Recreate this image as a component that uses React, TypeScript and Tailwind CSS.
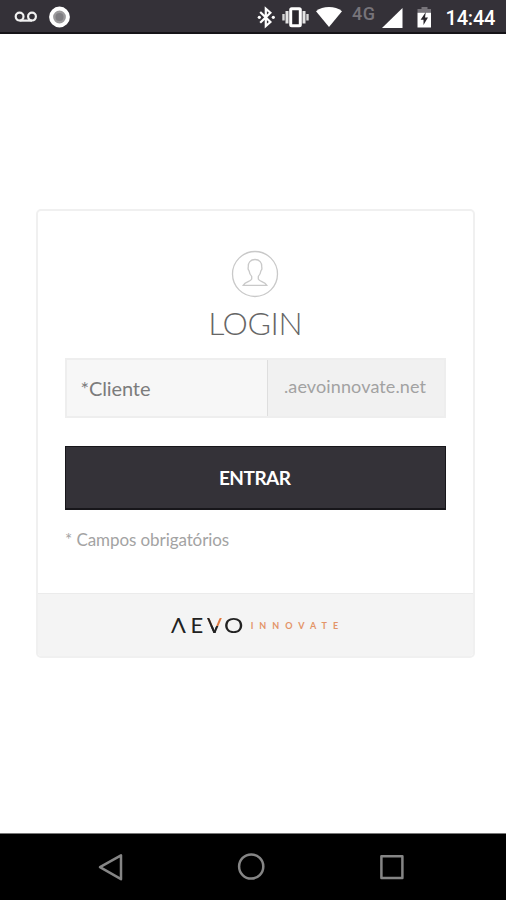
import { useState } from 'react'

function StatusBar() {
  return (
    <div className="flex h-[34px] items-start border-b-2 border-[#151318] bg-[#343138]">
      <svg width="436" height="32" viewBox="0 0 436 32" className="shrink-0">
        {/* voicemail */}
        <g fill="none" stroke="#f1f1f1" strokeWidth="2.2">
          <circle cx="19.6" cy="16.6" r="3.9" />
          <circle cx="32" cy="16.6" r="3.9" />
          <path d="M19.6 20.6H32" />
        </g>
        {/* recording dot */}
        <circle cx="59.5" cy="17" r="8.4" fill="#9b9a9c" stroke="#fff" strokeWidth="4" />
        <circle cx="59.5" cy="17" r="4" fill="#7f7e82" />
        {/* bluetooth */}
        <path d="M260.2 12L270.4 22L265.8 26V8.7L270.4 12.7L260.2 22.7" fill="none" stroke="#fff" strokeWidth="2.2" />
        <circle cx="259.3" cy="17.3" r="1.6" fill="#fff" />
        <circle cx="273.3" cy="17.3" r="1.6" fill="#fff" />
        {/* vibrate */}
        <rect x="290.7" y="8.7" width="9.6" height="17" rx="1" fill="#29262c" stroke="#fff" strokeWidth="3" />
        <path d="M287 11V23.5M304 11V23.5" stroke="#e4e4e4" strokeWidth="3" />
        <path d="M283.5 14V20.5M307.5 14V20.5" stroke="#d6d6d6" strokeWidth="2.4" />
        {/* wifi */}
        <path d="M329 27L316 11.2C319.6 8.4 324 7 329 7S338.4 8.4 342 11.2Z" fill="#fff" />
        <text x="352" y="19.5" fill="#77747a" fontSize="18" fontWeight="500" fontFamily="Roboto, sans-serif" textLength="23">4G</text>
        {/* signal */}
        <path d="M382 28L402.5 8V28Z" fill="#fff" />
        {/* battery */}
        <path d="M421.5 7H427.5V9H431V13H417.5V9H421.5Z" fill="#77747a" />
        <path d="M417.5 12.8H431V27.5H417.5Z" fill="#fff" />
        <path d="M425.8 12L420.6 19.7H423.5V25L428 17.5H425Z" fill="#29262c" />
      </svg>
      <span className="ml-[9.5px] mt-[3px] font-['Roboto',sans-serif] text-[20px] font-medium leading-[30px] tracking-[-0.2px] text-white">14:44</span>
    </div>
  )
}

function Logo() {
  return (
    <div className="flex items-center font-['Lato',sans-serif]" aria-label="AEVO Innovate">
      <div className="flex text-[22px] leading-[24px] text-[#222]">
        <span className="w-[19.5px]">Λ</span>
        <span className="w-[16.5px]">E</span>
        <span className="w-[17px] bg-[linear-gradient(to_right,#222_52%,transparent_52%),linear-gradient(to_bottom,#e27a3f_54%,#222_54%)] bg-clip-text text-transparent">V</span>
        <span className="origin-left scale-x-110">O</span>
      </div>
      <span className="ml-[9px] mt-[1px] text-[9px] font-bold leading-[12px] tracking-[6px] text-[#e39468]">INNOVATE</span>
    </div>
  )
}

function NavBar() {
  return (
    <div className="h-[67px] border-t border-[#777] bg-black">
      <svg width="506" height="66" viewBox="0 0 506 66" fill="none" stroke="#858585" strokeWidth="2.5" strokeLinejoin="round">
        <path d="M100 33.2L121 21.3V45.2Z" />
        <circle cx="251.2" cy="32.5" r="12.1" />
        <rect x="381.4" y="22.3" width="21" height="21.6" />
      </svg>
    </div>
  )
}

export default function App() {
  const [client, setClient] = useState('')

  return (
    <div className="flex h-[900px] w-[506px] flex-col overflow-hidden bg-white font-['Lato',sans-serif]">
      <StatusBar />
      <main className="flex-1 pl-[36px] pt-[175px]">
        <div className="flex h-[449px] w-[438.5px] flex-col overflow-hidden rounded-[5px] border-2 border-[#f0f0f0] bg-white">
          <form className="flex flex-1 flex-col px-[27px] pt-[39px]" onSubmit={(e) => e.preventDefault()}>
            <svg width="48" height="48" viewBox="0 0 48 48" fill="none" stroke="#c9c9c9" strokeWidth="1.3" className="mr-[1px] self-center">
              <circle cx="24" cy="24" r="22.5" />
              <path d="M24 9.5C19.5 9.5 17 12.6 17.3 17C17 18 17.2 19.8 18 20.6C18.4 23.2 19.3 25 20.7 26.4V29C19.5 31.8 14.5 31.5 12.2 35.3H35.8C33.5 31.5 28.5 31.8 27.3 29V26.4C28.7 25 29.6 23.2 30 20.6C30.8 19.8 31 18 30.7 17C31 12.6 28.5 9.5 24 9.5Z" />
            </svg>
            <h1 className="mt-[6px] text-center text-[32px] font-light leading-[38px] tracking-[-0.4px] text-[#666]">LOGIN</h1>
            <div className="mt-[16px] flex h-[60px] border-2 border-[#eee] bg-[#f7f7f7]">
              <input
                value={client}
                onChange={(e) => setClient(e.target.value)}
                placeholder="*Cliente"
                className="w-[200px] pl-[13.5px] text-[20px] tracking-[-0.1px] text-[#666] outline-none placeholder:text-[#7c7c7c]"
              />
              <span className="flex-1 border-l border-[#dedede] bg-[#f1f1f1] pl-[16px] text-[18px] leading-[52px] tracking-[0.12px] text-[#a2a2a2]">.aevoinnovate.net</span>
            </div>
            <button className="mt-[28px] h-[64px] border border-b-2 border-[#17161a] bg-[#343238] pr-[1px] pt-[2px] text-[19px] font-bold tracking-[-0.5px] text-white">ENTRAR</button>
            <p className="mt-[19px] text-[17px] leading-[22px] tracking-[-0.08px] text-[#a3a3a3]">* Campos obrigatórios</p>
          </form>
          <div className="flex h-[63px] items-center border-t border-[#ebebeb] bg-[#f4f4f4] pl-[133px]">
            <Logo />
          </div>
        </div>
      </main>
      <NavBar />
    </div>
  )
}
